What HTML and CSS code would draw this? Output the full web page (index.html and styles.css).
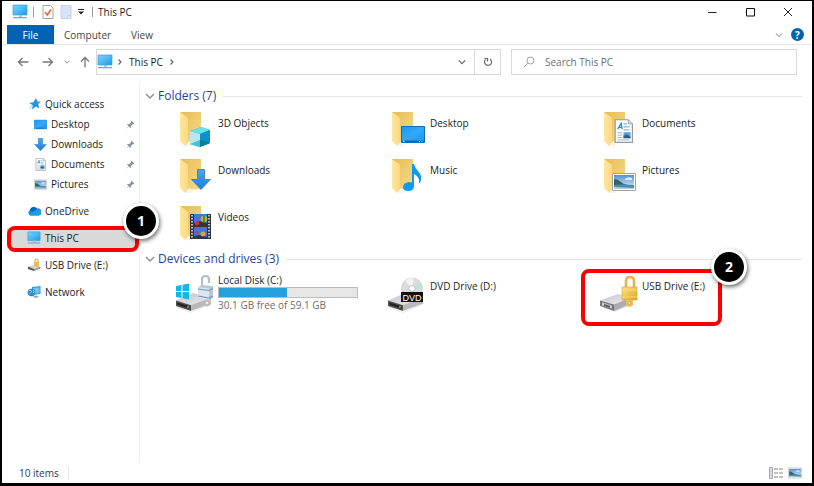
FILE: index.html
```html
<!DOCTYPE html>
<html lang="en">
<head>
<meta charset="utf-8">
<title>This PC</title>
<link rel="stylesheet" href="styles.css">
</head>
<body>
<svg class="defs" aria-hidden="true">
  <defs>
    <linearGradient id="gScreen" x1="0" y1="0" x2="1" y2="1"><stop offset="0" stop-color="#7fd0fb"/><stop offset=".5" stop-color="#4dbaf5"/><stop offset="1" stop-color="#1f97e6"/></linearGradient>
    <linearGradient id="gFront" x1="0" y1="0" x2="1" y2="0"><stop offset="0" stop-color="#ffe79c"/><stop offset="1" stop-color="#fbd983"/></linearGradient>
    <linearGradient id="gBack" x1="0" y1="0" x2="1" y2="1"><stop offset="0" stop-color="#e6bb58"/><stop offset="1" stop-color="#f8dc86"/></linearGradient>
    <linearGradient id="gArrow" x1="0" y1="0" x2="0" y2="1"><stop offset="0" stop-color="#4aa6ee"/><stop offset="1" stop-color="#1f7fdc"/></linearGradient>
    <linearGradient id="gDesk" x1="0" y1="0" x2="1" y2="1"><stop offset="0" stop-color="#1797f5"/><stop offset=".5" stop-color="#33a9fb"/><stop offset="1" stop-color="#1496f5"/></linearGradient>
    <linearGradient id="gTop" x1="0" y1="0" x2="1" y2="1"><stop offset="0" stop-color="#c4c4c8"/><stop offset="1" stop-color="#ededf0"/></linearGradient>
    <linearGradient id="gGold" x1="0" y1="0" x2="1" y2="1"><stop offset="0" stop-color="#ffe187"/><stop offset="1" stop-color="#dfa424"/></linearGradient>
    <linearGradient id="gSky" x1="0" y1="0" x2="0" y2="1"><stop offset="0" stop-color="#4f8fd8"/><stop offset="1" stop-color="#e4f3fb"/></linearGradient>
    <symbol id="monitor" viewBox="0 0 16 16">
      <path d="M1 1h14v10H1z" fill="url(#gScreen)" stroke="#3f9bd0" stroke-width=".7"/>
      <path d="M7 11h3v2H7z" fill="#a7c4d8"/><path d="M1 13h14v1.300H1z" fill="#7aa8c6"/>
    </symbol>
    <symbol id="folder" viewBox="0 0 38 38">
      <path d="M4 0h21v30l-14 1L4 28z" fill="url(#gBack)"/>
      <path d="M10 33l3-4 4 3-3 3z" fill="#f4f4f2"/>
      <path d="M4 0l7 5q1 1 1 2v21l-2 6q-1 0-2-1l-4-4z" fill="url(#gFront)"/>
    </symbol>
    <symbol id="doc" viewBox="0 0 16 20">
      <path d="M1 .5h11l3.500 3.500v15.500H1z" fill="#fcfdfe" stroke="#989b9e"/>
      <path d="M12 .5V4h3.500" fill="#ddd" stroke="#989b9e" stroke-width=".7"/>
      <path d="M3 8.500l3-5 .8 5M4.300 7h2.500" fill="none" stroke="#2390d6" stroke-width="1.100"/>
      <path d="M8 4h3M8 6.500h5M8 9h5" stroke="#7bbbe0" stroke-width="1.100"/>
      <path d="M3 11.500h4M3 13.500h4M3 15.500h4M3 17.500h10" stroke="#9fb4c2" stroke-width=".8"/>
      <path d="M8 11h6v5H8z" fill="#5f9fd6"/><path d="M8 14l3-1 3 2v1H8z" fill="#30627e"/>
    </symbol>
    <symbol id="picture" viewBox="0 0 24 18">
      <path d="M.5.5h23v17H.5z" fill="#fff" stroke="#a0a4a6"/>
      <path d="M2 2h20v14H2z" fill="url(#gSky)"/>
      <path d="M2 6q4 0 7 3t7 3l6 1v3H2z" fill="#32675f"/>
      <path d="M2 12q8-1 20 0v4H2z" fill="#4d8fab"/><path d="M2 14l20 1v1H2z" fill="#b2d3de"/>
      <path d="M13 6q3-3 7-1v2h-7z" fill="#d9edfa"/>
    </symbol>
    <symbol id="down" viewBox="0 0 20 21">
      <path d="M6.500.5h7v10h6L10 20.500.5 10.500h6z" fill="url(#gArrow)" stroke="#2a7cc6" stroke-width=".8"/>
    </symbol>
    <symbol id="desk" viewBox="0 0 24 17">
      <path d="M.5.5h23v16H.5z" fill="url(#gDesk)" stroke="#0b6fb9"/>
      <path d="M1 14.500h22V16H1z" fill="#0c6db2"/><path d="M2 15.300h1.500M18 15.300h1M20.500 15.300h1" stroke="#fff"/>
    </symbol>
    <symbol id="pin" viewBox="0 0 10 10">
      <path d="M6 .8L9.300 4l-1 .6L7 4.900 5.600 6.300l-.2 1.900-.7.600L3 7 .8 9.400.6 9.200 2.800 6.800 1.200 5.200l.6-.7 1.900-.1L5.200 3l.2-1.400z" fill="#8795a0"/>
    </symbol>
    <symbol id="drive" viewBox="0 0 38 38">
      <path d="M1 31l14 6 21-10v2L15 38 1 33z" fill="#000" opacity=".08"/>
      <path d="M0 25.500L17 18l18 5-20 7.500z" fill="url(#gTop)"/>
      <path d="M15 30l20-7v5.500L15 36z" fill="#b7b7bd"/>
      <path d="M0 25.500l15 4.800V36L0 31z" fill="#505054"/>
      <path d="M1.500 27.500l12 3.700v2.600l-12-3.700z" fill="#242426"/>
      <circle cx="12" cy="32" r="1" fill="#35df39"/>
    </symbol>
    <symbol id="chev" viewBox="0 0 10 10"><path d="M1 3l4 4 4-4" fill="none" stroke="currentColor" stroke-width="1.400"/></symbol>
    <symbol id="next" viewBox="0 0 10 10"><path d="M3.500 2.500L6 5 3.500 7.500" fill="none" stroke="currentColor" stroke-width="1.200"/></symbol>
    <symbol id="back" viewBox="0 0 12 12"><path d="M11.500 6H1.500M5.500 2l-4 4 4 4" fill="none" stroke="currentColor" stroke-width="1.300"/></symbol>
  </defs>
</svg>

<div class="window">
  <header class="titlebar">
    <svg class="i16"><use href="#monitor"/></svg>
    <span class="sep"></span>
    <button class="quick" aria-label="Properties"><svg viewBox="0 0 12 14" width="12" height="14"><path d="M1 .5h7.500L11 3v10.500H1z" fill="#fff" stroke="#a2a2a2"/><path d="M3 7l2.300 3L9 4.500" fill="none" stroke="#e8703a" stroke-width="1.700"/></svg></button>
    <button class="quick" aria-label="New folder"><svg viewBox="0 0 12 14" width="12" height="14"><path d="M1 .5h10v13H1z" fill="#d7e3f6" stroke="#c3d2ea"/><path d="M8 13.500v-3h3" fill="#eef4fd" stroke="#c3d2ea"/></svg></button>
    <button class="more" aria-label="Customize toolbar"><svg viewBox="0 0 8 8" width="8" height="8"><path d="M1 1.500h6" stroke="#222"/><path d="M1 3.500h6L4 6.500z" fill="#222"/></svg></button>
    <span class="sep"></span>
    <h1>This PC</h1>
    <div class="controls">
      <button aria-label="Minimize"><svg viewBox="0 0 10 10" width="10" height="10"><path d="M1 5.500h8.500" stroke="#222" fill="none"/></svg></button>
      <button aria-label="Maximize"><svg viewBox="0 0 10 10" width="10" height="10"><path d="M1.500 1.500h8v7.500h-8z" stroke="#111" fill="none"/></svg></button>
      <button aria-label="Close"><svg viewBox="0 0 10 10" width="10" height="10"><path d="M1 1l8 8M9 1L1 9" stroke="#222" fill="none"/></svg></button>
    </div>
  </header>

  <nav class="ribbon" aria-label="Ribbon">
    <button class="file">File</button>
    <button>Computer</button>
    <button>View</button>
    <div class="ribbon-end">
      <button aria-label="Expand ribbon"><svg class="i8 pale"><use href="#chev"/></svg></button>
      <button class="help" aria-label="Help">?</button>
    </div>
  </nav>

  <div class="toolbar">
    <div class="history">
      <button aria-label="Back"><svg class="i12"><use href="#back"/></svg></button>
      <button aria-label="Forward"><svg class="i12 flip"><use href="#back"/></svg></button>
      <button class="recent" aria-label="Recent"><svg class="i6"><use href="#chev"/></svg></button>
      <button class="up" aria-label="Up"><svg class="i12 turn"><use href="#back"/></svg></button>
    </div>
    <div class="address">
      <svg class="i16"><use href="#monitor"/></svg>
      <svg class="i10"><use href="#next"/></svg>
      <span class="crumb">This PC</span>
      <svg class="i10"><use href="#next"/></svg>
      <button class="drop" aria-label="Previous locations"><svg class="i8"><use href="#chev"/></svg></button>
      <button class="refresh" aria-label="Refresh"><svg viewBox="0 0 12 12" width="12" height="12"><path d="M8 3a3.500 3.500 0 1 1-4.500.5M2.500 2.500h3v3" fill="none" stroke="#6a6a6a" stroke-width="1.200"/></svg></button>
    </div>
    <label class="search">
      <svg viewBox="0 0 12 12" width="12" height="12"><circle cx="7.500" cy="4.500" r="3.500" fill="none" stroke="#a0a0a0"/><path d="M5 7L1 11" stroke="#a0a0a0"/></svg>
      <input type="search" placeholder="Search This PC" aria-label="Search This PC">
    </label>
  </div>

  <div class="body">
    <nav class="side" aria-label="Navigation pane">
      <ul>
        <li><a href="#"><svg class="i12" viewBox="0 0 12 12"><path d="M7 0l1.400 3.500 3.400.2L9.200 6l1 4.500-3.300-2L3 11.500l.8-4.300L.3 5l4.200-.8z" fill="#2193e0"/><path d="M.5 9.500L3 7.500M1 11.500l2-2" stroke="#79bfee" stroke-width=".8"/></svg>Quick access</a></li>
        <li class="child"><a href="#"><svg class="i13"><use href="#desk"/></svg>Desktop<svg class="pin"><use href="#pin"/></svg></a></li>
        <li class="child"><a href="#"><svg class="i13"><use href="#down"/></svg>Downloads<svg class="pin"><use href="#pin"/></svg></a></li>
        <li class="child"><a href="#"><svg class="i13"><use href="#doc"/></svg>Documents<svg class="pin"><use href="#pin"/></svg></a></li>
        <li class="child"><a href="#"><svg class="i13"><use href="#picture"/></svg>Pictures<svg class="pin"><use href="#pin"/></svg></a></li>
      </ul>
      <ul>
        <li><a href="#"><svg class="i14" viewBox="0 0 14 14"><path d="M3.500 11.500A3 3 0 0 1 3 6a4 4 0 0 1 7-1.500 3.500 3.500 0 0 1 1.500 7z" fill="#1490df"/><path d="M3 6a4 4 0 0 1 7-1.500L9.500 6 5 7.500z" fill="#0364b8"/><path d="M2 11l7-5a3 3 0 0 1 4.500 4.500q-.8 1-2 1h-8z" fill="#1e9ce9"/></svg>OneDrive</a></li>
      </ul>
      <ul>
        <li class="current"><a href="#" aria-current="page"><svg class="i14"><use href="#monitor"/></svg>This PC</a><span class="outline"></span><span class="badge">1</span></li>
      </ul>
      <ul>
        <li><a href="#"><svg class="i14" viewBox="0 0 14 14"><path d="M1 8.500L6 7l7.500 1.500L7 11z" fill="#d5d5d8"/><path d="M1 8.500L7 11v2l-6-2z" fill="#55555a"/><path d="M7 11l6.500-2.500v2L7 13z" fill="#97979c"/><path d="M8 4V2.500a1.500 1.500 0 0 1 3 0V4" fill="none" stroke="#ddb03d" stroke-width="1.200"/><path d="M7 4h5v4.500H7z" fill="#e9bd4c"/></svg>USB Drive (E:)</a></li>
      </ul>
      <ul>
        <li><a href="#"><svg class="i14" viewBox="0 0 14 14"><path d="M5 2l8.500-1v8L5 10z" fill="#3394d6"/><path d="M6 3l6.500-.8v6L6 9z" fill="#70c3ef"/><circle cx="4.500" cy="7.500" r="3.800" fill="#2c87c4"/><path d="M2 5.500q3-.5 2.500 1T2.500 9M6 5l1 1.500-1 2" fill="none" stroke="#8fd6ed"/><path d="M6 11l4-.5 2 1.500-4 1z" fill="#8ea8b8"/></svg>Network</a></li>
      </ul>
    </nav>

    <main>
      <section>
        <h2><svg class="i10"><use href="#chev"/></svg>Folders (7)</h2>
        <div class="grid">
          <a class="tile" href="#"><svg viewBox="0 0 38 38"><use href="#folder"/><path d="M14 19l11-4 9 3v13l-11 4-9-3z" fill="#19b4d2"/><path d="M14 19l11-4 9 3-10 4z" fill="#6be0e8"/><path d="M14 19l10 3v13l-10-3z" fill="#b6e8ee"/><path d="M24 22l10-4v13l-10 4z" fill="#0a93cb"/><path d="M14 32l10-4v7z" fill="#49c0ce"/><path d="M24 28l10 3-10 4z" fill="#087f93"/></svg><span>3D Objects</span></a>
          <a class="tile" href="#"><svg viewBox="0 0 38 38"><use href="#folder"/><use href="#desk" x="13" y="14" width="24" height="17"/></svg><span>Desktop</span></a>
          <a class="tile" href="#"><svg viewBox="0 0 38 38"><use href="#folder"/><use href="#doc" x="14" y="7" width="19" height="24"/></svg><span>Documents</span></a>
          <a class="tile" href="#"><svg viewBox="0 0 38 38"><use href="#folder"/><use href="#down" x="15" y="10" width="20" height="21"/></svg><span>Downloads</span></a>
          <a class="tile" href="#"><svg viewBox="0 0 38 38"><use href="#folder"/><path d="M24 5h2q1 4 4 7 5 5 2 12h-1q1-6-5-9v12q0 5-6 5-5 0-5-4t6-5l3 .5z" fill="#0c9bf3"/></svg><span>Music</span></a>
          <a class="tile" href="#"><svg viewBox="0 0 38 38"><use href="#folder"/><use href="#picture" x="12" y="14" width="24" height="18"/></svg><span>Pictures</span></a>
          <a class="tile" href="#"><svg viewBox="0 0 38 38"><use href="#folder"/><path d="M14 8h21v25H14z" fill="#32353b"/><path d="M18 8h13v12H18zM18 21h13v11H18z" fill="#4774d8"/><path d="M18 17l6-2 7 2v3H18zM18 30l6-1 7 2v1H18z" fill="#263b31"/><circle cx="28" cy="13" r="3.300" fill="#dda81e"/><path d="M27 9.700h2v6.600h-2z" fill="#319b48"/><circle cx="21" cy="17" r="2.300" fill="#c83838"/><circle cx="27" cy="28" r="2.500" fill="#dda81e"/><circle cx="21" cy="27" r="1.300" fill="#c83838"/><path d="M16 9v24M33 9v24" stroke="#e9edf1" stroke-width="1.500" stroke-dasharray="1.500 1.500"/></svg><span>Videos</span></a>
        </div>
      </section>

      <section class="drives">
        <h2><svg class="i10"><use href="#chev"/></svg>Devices and drives (3)</h2>
        <div class="grid">
          <a class="tile full" href="#"><svg viewBox="0 0 38 38"><use href="#drive"/><path d="M0 11l5.500-1v6H0zM6.500 9.800L13 8.600V16H6.500zM0 17h5.500v6L0 22zM6.500 17H13v7.400l-6.500-1.200z" fill="#16b5ef"/><path d="M26 11V5q0-4 3.500-4T33 5v3" fill="none" stroke="#b8bec3" stroke-width="2.200"/><path d="M22 12l4-2 11 1v12l-4 2-11-2z" fill="#b8c7d2"/><path d="M22 12l11 1.500V25l-11-2z" fill="#dce5eb"/><path d="M22 14l11 1.500 4-2M22 21l11 2 4-2" fill="none" stroke="#6c9cc0" stroke-width="1.200"/><path d="M28 25h7v4q-3 4-6 2z" fill="#c1c5c8"/><circle cx="31" cy="28" r="2" fill="#eee" stroke="#999" stroke-width=".7"/></svg>
            <span>Local Disk (C:)<span class="bar" role="progressbar" aria-label="Used space" aria-valuenow="49"><span class="fill" style="width:49%"></span></span><small>30.1 GB free of 59.1 GB</small></span></a>
          <a class="tile" href="#"><svg viewBox="0 0 38 38"><use href="#drive"/><circle cx="24" cy="13.500" r="10.500" fill="#d9dddf" stroke="#c0c4c6" stroke-width=".6"/><path d="M24 13.500L17 6q5-4 9-2.500z" fill="#f2f3f3"/><path d="M24 13.500L32 7q3 4 2 8z" fill="#c7e0d3"/><circle cx="24" cy="13.500" r="3" fill="#fff" stroke="#b5b9bc" stroke-width=".8"/><path d="M13 17h22v10H13z" fill="#111"/><text x="24" y="25.500" class="dvd">DVD</text></svg><span>DVD Drive (D:)</span></a>
          <a class="tile marked" href="#"><svg viewBox="0 0 38 38"><path d="M2 32l13 5 19-8-3-3z" fill="#000" opacity=".1"/><path d="M0 25.500L18 19l12 4-16 6.500z" fill="url(#gTop)"/><path d="M14 29.500L30 23v6l-16 7z" fill="#aaaab0"/><path d="M0 25.500l14 4V36L0 31z" fill="#77777b"/><path d="M2 27.500l10 3v3l-10-3z" fill="#cfcfd2"/><path d="M4 29l6 1.800v2L4 31z" fill="#5a5a5e"/><path d="M26 13V6q0-4 4-4t4 4v7" fill="none" stroke="#e6b64c" stroke-width="2.600"/><path d="M22 12h15v13H22z" fill="url(#gGold)" stroke="#d19e2d" stroke-width=".6"/><path d="M22 15h15M22 22h15" stroke="#f9d977"/><path d="M26 25h7v5q-3.500 4-7 0z" fill="#efc154"/><circle cx="29.500" cy="28" r="1.500" fill="#fff1b8" stroke="#b98928" stroke-width=".6"/></svg><span>USB Drive (E:)</span><span class="outline"></span><span class="badge">2</span></a>
        </div>
      </section>
    </main>
  </div>

  <footer>
    <span class="count">10 items</span>
    <div class="views">
      <button aria-label="Details"><svg viewBox="0 0 14 12" width="14" height="12"><path d="M.5.5h3v11h-3zM.5 4h3M.5 8h3" fill="#fff" stroke="#a7a7a7"/><path d="M1.500 2h1M1.500 6h1M1.500 10h1" stroke="#6a8bab"/><path d="M5 2h4M10 2h4M5 6h4M10 6h4M5 10h4M10 10h4" stroke="#858585"/></svg></button>
      <button aria-label="Large icons"><svg class="thumb"><use href="#picture"/></svg></button>
    </div>
  </footer>
</div>
</body>
</html>
```
FILE: styles.css
```css
* { box-sizing: border-box; }

body {
  margin: 0;
  font: 10px/14px "Open Sans", "Noto Sans", sans-serif;
  color: #1b1b1b;
}

h1, h2, ul { margin: 0; padding: 0; font: inherit; }
ul { list-style: none; }
a { color: inherit; text-decoration: none; }
svg { display: block; flex: none; }
.defs { position: absolute; width: 0; height: 0; }

button {
  display: flex;
  align-items: center;
  justify-content: center;
  padding: 0;
  border: 0;
  background: none;
  font: inherit;
  color: inherit;
}

.i6 { width: 6px; height: 6px; }
.i8 { width: 8px; height: 8px; }
.i10 { width: 10px; height: 10px; }
.i12 { width: 12px; height: 12px; }
.i13 { width: 13px; height: 13px; }
.i14 { width: 14px; height: 14px; }
.i16 { width: 16px; height: 16px; }
.flip { transform: scaleX(-1); }
.turn { transform: rotate(90deg); }
.pale { color: #aaa; }

.window {
  display: flex;
  flex-direction: column;
  min-height: 100vh;
  border: solid #000;
  border-width: 1px 2px 3px;
  background: #fff;
}

.titlebar {
  display: flex;
  align-items: center;
  height: 24px;
  padding: 0 0 2px 10px;
}
.sep { width: 1px; height: 10px; background: #999; }
.titlebar .sep { margin: 0 5px; }
.titlebar .quick { width: 18px; }
.more { width: 12px; }
.controls { display: flex; margin-left: auto; padding-right: 5px; }
.controls button { width: 38px; height: 22px; }

.ribbon {
  display: flex;
  height: 20px;
  padding: 0 5px;
  border-bottom: 1px solid #e6e6e6;
  color: #444;
}
.ribbon > button { padding: 0 10px; }
.ribbon .file { width: 47px; background: #0063b1; color: #fff; }
.ribbon-end { display: flex; align-items: center; gap: 8px; margin-left: auto; padding-right: 3px; }
.help {
  width: 13px;
  height: 13px;
  border-radius: 50%;
  background: #0063b1;
  color: #fff;
  font-weight: 700;
}

.toolbar {
  display: flex;
  gap: 10px;
  padding: 4px 15px 4px 14px;
}
.history { display: flex; align-items: center; color: #777; }
.history button { width: 25px; height: 26px; }
.history button:first-child { width: 14px; margin-right: 5px; }
.history .recent { width: 14px; }
.history .up { width: 12px; margin: 0 -5px 0 5px; }
.address, .search {
  display: flex;
  align-items: center;
  height: 26px;
  border: 1px solid #d9d9d9;
}
.address { flex: 403; color: #666; }
.address .i16 { margin-right: 2px; }
.address .crumb { margin: 0 4px; color: #1b1b1b; }
.drop { width: 25px; height: 24px; margin-left: auto; }
.refresh { width: 26px; height: 24px; border-left: 1px solid #d9d9d9; }
.search { flex: 273; gap: 10px; padding-left: 11px; }
.search input {
  flex: 1;
  min-width: 0;
  padding: 0;
  border: 0;
  outline: 0;
  background: none;
  font: inherit;
}
.search input::placeholder { color: #6d6d6d; }

.body { display: flex; flex: 1; padding-top: 3px; }

.side {
  display: flex;
  flex-direction: column;
  gap: 7px;
  width: 138px;
  padding: 12px 0 0 5px;
  border-right: 1px solid #eee;
}
.side a {
  display: flex;
  align-items: center;
  gap: 4px;
  height: 20px;
  padding-left: 20px;
}
.side ul:first-child a { padding-left: 22px; }
.side ul:first-child .child a { padding-left: 27px; }
.side .pin { width: 9px; height: 9px; margin: 0 4px 0 auto; }
.current { position: relative; }
.current a { background: #d9d9d9; }

main { flex: 1; padding: 3px 0 0 5px; }
h2 {
  display: flex;
  align-items: center;
  gap: 3px;
  margin-right: 10px;
  font-size: 12px;
  line-height: 22px;
  color: #2a3f9c;
}
h2 svg { color: #8d8d8d; }
h2::after { content: ""; flex: 1; height: 1px; margin-left: 4px; background: #e4e4e4; }

.grid {
  display: grid;
  grid-template-columns: repeat(3, 1fr);
  padding-left: 31px;
}
.tile { position: relative; display: flex; gap: 4px; height: 47px; padding-top: 5px; }
.tile > svg { width: 38px; height: 38px; }
.tile > span { padding-top: 4px; }
.full > span { padding: 0; margin-top: -2px; }
.bar { display: block; width: 140px; height: 11px; border: 1px solid #bcbcbc; background: #e6e6e6; }
.fill { display: block; height: 100%; background: #26a0da; }
small { display: block; font-size: 10px; color: #6d6d6d; }
.dvd { font: 9px "Liberation Sans", sans-serif; fill: #fff; text-anchor: middle; }

.outline {
  position: absolute;
  border: 4px solid #fa0000;
  border-radius: 8px;
}
.current .outline { inset: -2px 0 -4px; }
.marked .outline { top: -1px; left: -19px; width: 141px; height: 57px; }

.badge {
  position: absolute;
  display: grid;
  place-items: center;
  width: 36px;
  height: 36px;
  border: 3px solid #fff;
  border-radius: 50%;
  background: #000;
  box-shadow: 1px 2px 4px rgb(0 0 0 / .6);
  color: #fff;
  font-size: 14px;
  font-weight: 700;
}
.current .badge { top: -25px; right: -20px; }
.marked .badge { top: -21px; left: 111px; padding: 0; }

footer {
  display: flex;
  align-items: center;
  height: 20px;
  padding: 0 10px 0 17px;
  color: #1e395b;
}
.count { padding-right: 9px; border-right: 1px solid #e6e6e6; }
.views { display: flex; align-items: center; gap: 5px; margin-left: auto; }
.thumb { width: 14px; height: 12px; }
```
